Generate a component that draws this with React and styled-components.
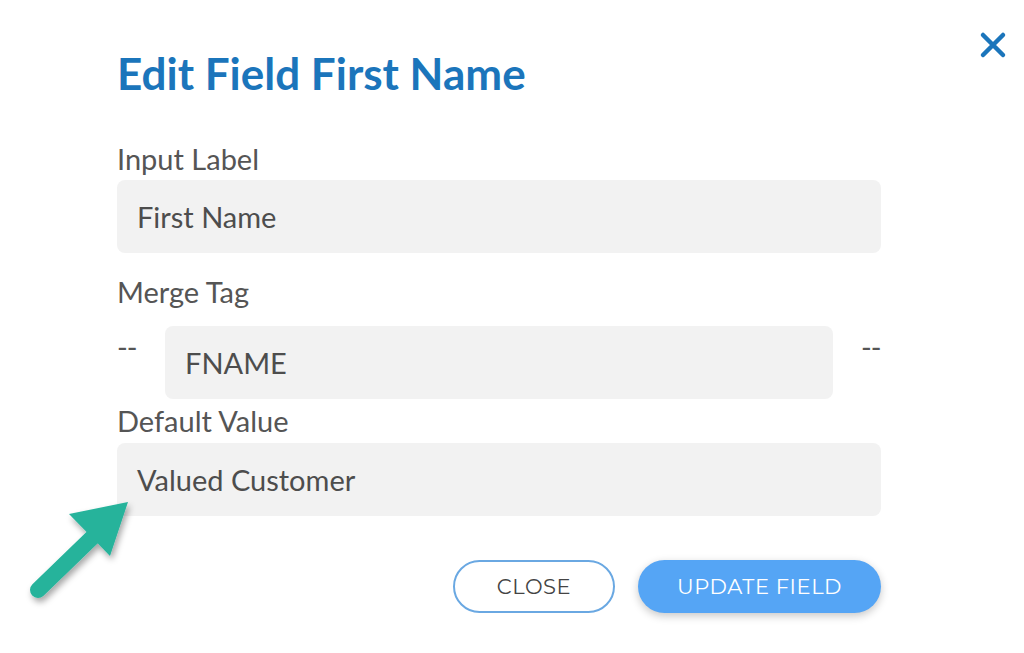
import React from "react";
import styled, { createGlobalStyle } from "styled-components";

const Global = createGlobalStyle`
  html, body { margin: 0; padding: 0; background: #fff; }
  body { font-family: Lato, "Noto Sans", sans-serif; }
`;

const Page = styled.div`
  position: relative;
  width: 1024px;
  height: 653px;
  overflow: hidden;
  background: #fff;
`;

const Dialog = styled.div`
  width: 764px;
  padding: 47px 0 0 117px;
  display: flex;
  flex-direction: column;
`;

const Title = styled.h1`
  margin: 0 0 43px;
  font-family: Lato, sans-serif;
  font-weight: 700;
  font-size: 44px;
  line-height: 52px;
  color: #1b75bb;
`;

const Label = styled.label`
  display: block;
  font-family: Lato, sans-serif;
  font-size: 29px;
  line-height: 34px;
  color: #555;
  margin-bottom: ${(p) => p.$mb ?? 4}px;
`;

const Field = styled.div`
  display: flex;
  align-items: center;
  box-sizing: border-box;
  height: 73px;
  flex: ${(p) => (p.$grow ? "1 1 auto" : "none")};
  padding: 0 20px;
  background: #f2f2f2;
  border-radius: 8px;
  font-family: Lato, sans-serif;
  font-size: 29px;
  color: #4d4d4d;
  margin-bottom: ${(p) => p.$mb || 0}px;
`;

const MergeRow = styled.div`
  display: flex;
  align-items: flex-start;
  gap: 28px;
  height: 73px;
  margin-bottom: 5px;
`;

const Dash = styled.span`
  font-family: Lato, sans-serif;
  font-size: 29px;
  color: #555;
  line-height: 34px;
  margin-top: 4px;
  width: 20px;
  flex: none;
  white-space: nowrap;
  letter-spacing: -1px;
`;

const Actions = styled.div`
  display: flex;
  justify-content: flex-end;
  gap: 23px;
  margin-top: 44px;
`;

const Button = styled.button`
  box-sizing: border-box;
  height: 53px;
  border-radius: 27px;
  font-family: Montserrat, "Noto Sans", sans-serif;
  font-size: 21px;
  letter-spacing: 0.6px;
  cursor: pointer;
  display: flex;
  align-items: center;
  justify-content: center;
`;

const CloseBtn = styled(Button)`
  width: 162px;
  background: #fff;
  border: 2px solid #6aa8e2;
  color: #444;
`;

const PrimaryBtn = styled(Button)`
  width: 243px;
  background: #55a5f5;
  border: none;
  color: #fff;
  box-shadow: 0 3px 8px rgba(0, 0, 0, 0.22);
`;

const CloseX = styled.button`
  position: absolute;
  top: 30px;
  left: 978px;
  width: 30px;
  height: 30px;
  padding: 0;
  border: none;
  background: none;
`;

const Arrow = styled.svg`
  position: absolute;
  left: 20px;
  top: 490px;
  overflow: visible;
`;

export default function App() {
  return (
    <Page>
      <Global />
      <CloseX aria-label="close">
        <svg width="30" height="30" viewBox="0 0 30 30">
          <path d="M5 5 L25 25 M25 5 L5 25" stroke="#1b75bb" strokeWidth="4.5" strokeLinecap="round" />
        </svg>
      </CloseX>
      <Dialog>
        <Title>Edit Field First Name</Title>
        <Label>Input Label</Label>
        <Field $mb={22}>First Name</Field>
        <Label $mb={17}>Merge Tag</Label>
        <MergeRow>
          <Dash>--</Dash>
          <Field $grow>FNAME</Field>
          <Dash>--</Dash>
        </MergeRow>
        <Label $mb={5}>Default Value</Label>
        <Field>Valued Customer</Field>
        <Actions>
          <CloseBtn>CLOSE</CloseBtn>
          <PrimaryBtn>UPDATE FIELD</PrimaryBtn>
        </Actions>
      </Dialog>
      <Arrow width="120" height="120" viewBox="0 0 120 120">
        <defs>
          <filter id="sh" x="-30%" y="-30%" width="160%" height="160%">
            <feDropShadow dx="2" dy="4" stdDeviation="3" floodColor="#000" floodOpacity="0.35" />
          </filter>
        </defs>
        <g filter="url(#sh)">
          <path d="M18 100 L80 40" stroke="#26b39b" strokeWidth="16" strokeLinecap="round" />
          <path d="M108 12 L49 24 L90 66 Z" fill="#26b39b" />
        </g>
      </Arrow>
    </Page>
  );
}
